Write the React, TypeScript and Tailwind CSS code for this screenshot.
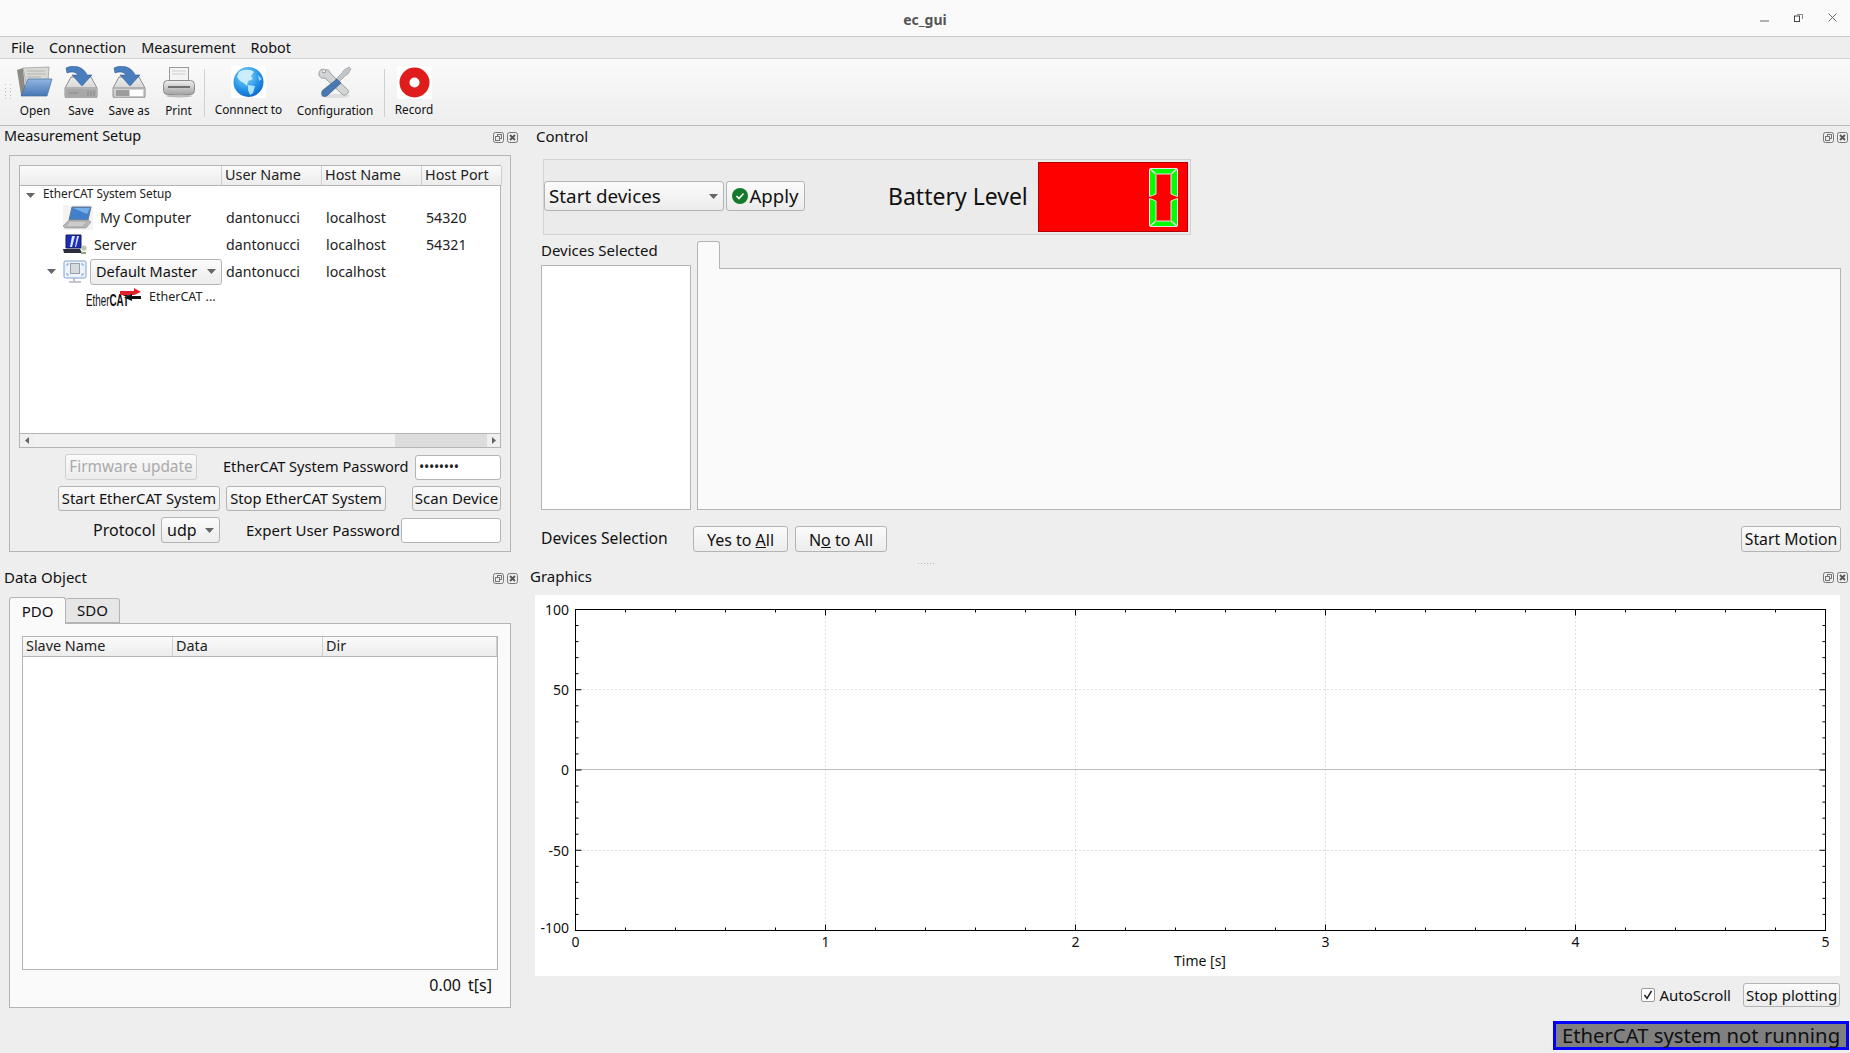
import type { ReactNode } from 'react'

const btn = 'flex items-center justify-center rounded-[3px] border border-[#b4b4b4] bg-gradient-to-b from-[#fbfbfb] to-[#ececec] text-[15px] text-[#111]'
const headCell = 'flex items-center border-r border-[#d0d0d0] bg-gradient-to-b from-[#fbfbfb] to-[#ececec] pl-[3px] text-[14.4px] leading-none text-[#222]'

function Tri({ className = '' }: { className?: string }) {
  return (
    <svg width="9" height="5" viewBox="0 0 9 5" className={className}>
      <path d="M0 0H9L4.5 5Z" fill="#666" />
    </svg>
  )
}

function DockIcons() {
  return (
    <div className="flex gap-[3px]">
      <svg width="11" height="11" viewBox="0 0 11 11" fill="none" stroke="#777">
        <rect x="0.5" y="0.5" width="10" height="10" rx="2" />
        <rect x="4.5" y="2.5" width="4" height="4" />
        <rect x="2.5" y="4.5" width="4" height="4" fill="#eee" />
      </svg>
      <svg width="11" height="11" viewBox="0 0 11 11" fill="none" stroke="#777">
        <rect x="0.5" y="0.5" width="10" height="10" rx="2" />
        <path d="M3 3L8 8M8 3L3 8" stroke="#555" strokeWidth="1.8" />
      </svg>
    </div>
  )
}

function DockTitle({ title, pad, size = 'text-[15px]' }: { title: string; pad: string; size?: string }) {
  return (
    <div className={`flex h-[22px] items-center justify-between pr-[2px] text-[#111] ${size} ${pad}`}>
      <span className="-mt-[2px]">{title}</span>
      <DockIcons />
    </div>
  )
}

function OpenIcon() {
  return (
    <svg width="36" height="32" viewBox="0 0 36 32">
      <defs>
        <linearGradient id="openBlue" x1="0" y1="0" x2="0" y2="1">
          <stop offset="0" stopColor="#93b6e2" />
          <stop offset="1" stopColor="#4676b6" />
        </linearGradient>
      </defs>
      <path d="M0 4L6 2L9 30L4 29Z" fill="#8b8b85" />
      <path d="M6 2L32 1L31 15L9 17Z" fill="#d9d9d6" stroke="#999" strokeWidth="0.7" />
      <path d="M10 5H28M10 8H29M10 11H24" stroke="#b4b4b0" />
      <path d="M4 30L11 13H35L30 30Z" fill="url(#openBlue)" stroke="#46719f" strokeWidth="0.7" />
    </svg>
  )
}

function DriveIcon({ saveAs }: { saveAs?: boolean }) {
  const id = saveAs ? 'driveA' : 'driveB'
  return (
    <svg width="34" height="32" viewBox="0 0 34 32">
      <defs>
        <linearGradient id={id} x1="0" y1="0" x2="0" y2="1">
          <stop offset="0" stopColor="#ececec" />
          <stop offset="1" stopColor="#c4c4c4" />
        </linearGradient>
      </defs>
      <path d="M7 11H27L33 22V30Q33 32 31 32H3Q1 32 1 30V22Z" fill={`url(#${id})`} stroke="#8e8e8e" />
      <path d="M2 22H32" stroke="#8e8e8e" />
      {saveAs ? (
        <>
          <rect x="4" y="24" width="13" height="6" fill="#9c9c9c" />
          <rect x="18" y="24" width="13" height="6" fill="#fff" />
        </>
      ) : (
        <>
          <rect x="2" y="23" width="30" height="8" fill="#a8a8a8" />
          <path d="M5 27H14M24 25V30M27 25V30M30 25V30" stroke="#878787" />
        </>
      )}
      <path d="M2 2C10 -2 20 1 23 9H28L18 20L8 9H14C12 6 8 5 3 7Z" fill="#4a7dbb" stroke="#2f5f9b" strokeWidth="0.6" />
    </svg>
  )
}

function PrintIcon() {
  return (
    <svg width="32" height="32" viewBox="0 0 32 32">
      <defs>
        <linearGradient id="printBody" x1="0" y1="0" x2="0" y2="1">
          <stop offset="0" stopColor="#f0f0f0" />
          <stop offset="1" stopColor="#a4a4a4" />
        </linearGradient>
      </defs>
      <rect x="6.5" y="1.5" width="19" height="13" fill="#f4f4f4" stroke="#9a9a9a" />
      <path d="M9 5H23M9 8H23" stroke="#cfcfcf" />
      <rect x="0.5" y="14.5" width="31" height="14" rx="4" fill="url(#printBody)" stroke="#8c8c8c" />
      <rect x="5" y="20" width="22" height="2" fill="#6f6f6f" />
      <ellipse cx="16" cy="30" rx="13" ry="1.5" fill="#bcbcbc" />
    </svg>
  )
}

function GlobeIcon() {
  return (
    <svg width="35" height="32" viewBox="0 0 35 32" className="bg-white">
      <defs>
        <radialGradient id="globeBlue" cx="0.4" cy="0.3" r="0.8">
          <stop offset="0" stopColor="#8fdcfb" />
          <stop offset="0.6" stopColor="#2190e6" />
          <stop offset="1" stopColor="#0b5fc2" />
        </radialGradient>
      </defs>
      <circle cx="17.5" cy="16" r="15" fill="url(#globeBlue)" />
      <path d="M8 6C12 3 20 3 23 6L20 10L22 13L17 15L16 20L13 17L9 15L6 11Z" fill="#d9f4fc" opacity="0.85" />
      <path d="M17 19L24 20L22 27L19 29L17 24Z" fill="#c8eefb" opacity="0.85" />
      <path d="M27 9L31 13L28 15Z" fill="#c8eefb" opacity="0.7" />
    </svg>
  )
}

function ConfigIcon() {
  return (
    <svg width="34" height="32" viewBox="0 0 34 32">
      <ellipse cx="17" cy="30" rx="15" ry="2" fill="#dedede" />
      <path d="M8 4C4 2 1 4 1 8C1 11 4 13 7 12L24 28C26 30 29 29 30 27C31 25 30 24 29 23L12 7C12 5 10 3 8 4L7 7L4 6" fill="#d2d4d6" stroke="#9a9c9e" />
      <path d="M31 1L33 3L30 8L27 10L20 17L17 14L24 7L26 4Z" fill="#c2c6ca" stroke="#8e9296" strokeWidth="0.6" />
      <path d="M19 13L23 17L10 29C8 31 5 31 4 29C3 27 4 25 5 24Z" fill="#4a79b0" stroke="#2b5585" strokeWidth="0.6" />
    </svg>
  )
}

function RecordIcon() {
  return (
    <svg width="35" height="33" viewBox="0 0 35 33" className="bg-white">
      <circle cx="17.5" cy="16.5" r="15" fill="#e01d1d" />
      <circle cx="17.5" cy="16.5" r="5" fill="#fff" />
    </svg>
  )
}

function LaptopIcon() {
  return (
    <svg width="30" height="25" viewBox="0 0 30 25" className="bg-[#f3f3f3]">
      <path d="M9 2H28L25 15H6Z" fill="#3f7fcc" stroke="#6a7a8c" />
      <path d="M10 3H27L24 9Z" fill="#77aee6" />
      <path d="M6 15H25L28 17L23 23H2L0 21Z" fill="#b5b5b5" stroke="#8c8c8c" strokeWidth="0.6" />
      <path d="M6 18H22M5 20H20" stroke="#e2e2e2" />
    </svg>
  )
}

function ServerIcon() {
  return (
    <svg width="24" height="21" viewBox="0 0 24 21">
      <path d="M3 1H18V14H3Z" fill="#1a2fb8" stroke="#151a5a" />
      <path d="M9 2L7 13H9L12 2ZM14 2L12 13H13L16 2Z" fill="#dfe6ff" />
      <path d="M0 15H17L19 19H1Z" fill="#2c2c3a" />
      <circle cx="21" cy="14" r="2.6" fill="#b8c8b0" />
      <path d="M18 19H23" stroke="#8ea885" strokeWidth="2" />
    </svg>
  )
}

function MasterIcon() {
  return (
    <svg width="24" height="24" viewBox="0 0 24 24" fill="none">
      <rect x="1" y="1" width="22" height="17" rx="1.5" fill="#eef3fb" stroke="#7e9fd0" />
      <rect x="7.5" y="3.5" width="9" height="10" fill="#d5d9e0" stroke="#9aa0aa" />
      <path d="M4 6V4H6M18 4H20V6M4 13V15H6M18 15H20V13" stroke="#7ea6dc" />
      <path d="M11 18V21M6 22H18" stroke="#aeb4bc" strokeWidth="1.6" />
    </svg>
  )
}

function EthercatLogo() {
  return (
    <svg width="55" height="19" viewBox="0 0 55 19" className="overflow-visible">
      <text x="0" y="18" fontSize="17" fill="#111" textLength="43" lengthAdjust="spacingAndGlyphs" fontFamily="'Liberation Sans', sans-serif">
        Ether<tspan fontWeight="700">CAT</tspan>
      </text>
      <path d="M34 3H48V0L55 4L48 7H34Z" fill="#e3202a" />
      <path d="M55 8H46V6L38 9.5L46 13V11H55Z" fill="#111" />
    </svg>
  )
}

function ToolButton({ label, width, icon, up }: { label: string; width: string; icon: ReactNode; up?: boolean }) {
  return (
    <div className={`flex flex-col items-center pt-[7px] ${width}`}>
      <div className="flex h-[32px] items-center justify-center">{icon}</div>
      <span className={`flex h-[18px] items-center text-[11.8px] whitespace-nowrap text-[#111] ${up ? 'mt-[3px]' : 'mt-[4px]'}`}>{label}</span>
    </div>
  )
}

function ToolSep() {
  return <div className="mt-[10px] h-[48px] w-px bg-[#d0d0d0]" />
}

function TreeRow({ h, first, user, host, port }: { h: string; first: ReactNode; user?: string; host?: string; port?: string }) {
  return (
    <div className={`grid grid-cols-[202px_100px_100px_80px] items-center text-[14.2px] text-[#222] ${h}`}>
      <div className="flex h-full items-center">{first}</div>
      <div className="pl-[4px]">{user}</div>
      <div className="pl-[4px]">{host}</div>
      <div className="pl-[4px]">{port}</div>
    </div>
  )
}

function PlotChart() {
  const xs = [0, 1, 2, 3, 4, 5]
  const ys = [
    { v: '100', y: 14.5 },
    { v: '50', y: 94.5 },
    { v: '0', y: 174.5 },
    { v: '-50', y: 255.5 },
    { v: '-100', y: 335.5 },
  ]
  const minorX = Array.from({ length: 26 }, (_, i) => 40.5 + i * 50)
  const minorY = Array.from({ length: 21 }, (_, i) => 14.5 + i * 16.05)
  return (
    <svg width="1305" height="381" viewBox="0 0 1305 381" className="bg-white">
      {xs.slice(1, 5).map((x) => (
        <line key={x} x1={40.5 + x * 250} x2={40.5 + x * 250} y1="14.5" y2="335.5" stroke="#bdbdbd" strokeDasharray="1 3" />
      ))}
      {ys.slice(1, 4).map((t) => (
        <line key={t.v} x1="40.5" x2="1290.5" y1={t.y} y2={t.y} stroke="#bdbdbd" strokeDasharray={t.v === '0' ? undefined : '1 3'} />
      ))}
      <rect x="40.5" y="14.5" width="1250" height="321" fill="none" stroke="#000" />
      {minorX.map((x, i) => {
        const len = i % 5 === 0 ? 6 : 3
        return (
          <g key={x} stroke="#000">
            <line x1={x} x2={x} y1="14.5" y2={14.5 + len} />
            <line x1={x} x2={x} y1="335.5" y2={335.5 - len} />
          </g>
        )
      })}
      {minorY.map((y, i) => {
        const len = i % 5 === 0 ? 6 : 3
        return (
          <g key={y} stroke="#000">
            <line x1="40.5" x2={40.5 + len} y1={y} y2={y} />
            <line x1="1290.5" x2={1290.5 - len} y1={y} y2={y} />
          </g>
        )
      })}
      <g fontSize="14" fill="#111" fontFamily="'Noto Sans', sans-serif">
        {ys.map((t) => (
          <text key={t.v} x="34" y={t.v === '-100' ? t.y + 2 : t.y + 5} textAnchor="end">{t.v}</text>
        ))}
        {xs.map((x) => (
          <text key={x} x={40.5 + x * 250} y="352" textAnchor="middle">{x}</text>
        ))}
        <text x="665" y="371" textAnchor="middle">Time [s]</text>
      </g>
    </svg>
  )
}

function LcdZero() {
  return (
    <svg width="29" height="59" viewBox="0 0 29 59">
      <g fill="#00ff00" stroke="#e4e4e4" strokeWidth="1">
        <path d="M1 0.5H28L21.5 6H7.5Z" />
        <path d="M7.5 53H21.5L28 58.5H1Z" />
        <path d="M0.5 1L7 6.5V26L3.5 27.5L0.5 28.5Z" />
        <path d="M28.5 1L22 6.5V26L25.5 27.5L28.5 28.5Z" />
        <path d="M0.5 30.5L3.5 31.5L7 33V52.5L0.5 58Z" />
        <path d="M28.5 30.5L25.5 31.5L22 33V52.5L28.5 58Z" />
      </g>
    </svg>
  )
}

export default function App() {
  return (
    <div className="flex h-[1053px] w-[1850px] flex-col overflow-hidden bg-[#eeeeee] font-['Noto_Sans',sans-serif]">
      {/* Window title bar */}
      <div className="relative flex h-[37px] items-center justify-center border-b border-[#c8c8c8] bg-[#fafafa] pt-[3px]">
        <span className="text-[14px] font-bold text-[#555]">ec_gui</span>
        <div className="absolute top-[12px] right-[13px] flex items-center gap-[25px]">
          <svg width="9" height="11" viewBox="0 0 9 11"><path d="M0 9H9" stroke="#666" /></svg>
          <svg width="9" height="9" viewBox="0 0 9 9" fill="none"><path d="M3 1.5H8.5V6" stroke="#888" /><rect x="0.5" y="3" width="5" height="5.5" stroke="#444" /></svg>
          <svg width="9" height="9" viewBox="0 0 9 9"><path d="M0.5 0.5L8.5 8.5M8.5 0.5L0.5 8.5" stroke="#666" /></svg>
        </div>
      </div>

      {/* Menu bar */}
      <div className="flex h-[22px] items-center gap-[15px] border-b border-[#d4d4d4] pl-[11px] text-[14.4px] text-[#111]">
        <span>File</span>
        <span>Connection</span>
        <span>Measurement</span>
        <span>Robot</span>
      </div>

      {/* Toolbar */}
      <div className="flex h-[67px] border-b border-[#bdbdbd] bg-gradient-to-b from-[#fafafa] to-[#eeeeee]">
        <div className="mt-[25px] ml-[5px] grid h-[16px] w-[8px] grid-cols-2 gap-[2px]">
          {Array.from({ length: 10 }, (_, i) => (
            <div key={i} className="h-px w-px bg-[#bbb]" />
          ))}
        </div>
        <ToolButton label="Open" width="w-[44px]" icon={<OpenIcon />} />
        <ToolButton label="Save" width="w-[48px]" icon={<DriveIcon />} />
        <ToolButton label="Save as" width="w-[48px]" icon={<DriveIcon saveAs />} />
        <ToolButton label="Print" width="w-[51px]" icon={<PrintIcon />} />
        <ToolSep />
        <ToolButton label="Connnect to" width="w-[87px]" icon={<GlobeIcon />} up />
        <ToolButton label="Configuration" width="w-[86px]" icon={<ConfigIcon />} />
        <div className="w-[6px]" />
        <ToolSep />
        <ToolButton label="Record" width="w-[58px]" icon={<RecordIcon />} up />
      </div>

      <div className="flex flex-1">
        {/* Left column */}
        <div className="flex w-[527px] flex-col">
          <DockTitle title="Measurement Setup" pad="pl-[4px] pr-[9px]" size="text-[14.4px]" />

          <div className="mt-[7px] ml-[9px] flex h-[397px] w-[502px] flex-col border border-[#b4b4b4] px-[9px] pt-[9px]">
            {/* Tree */}
            <div className="flex h-[283px] w-[482px] flex-col border border-[#b4b4b4] bg-white">
              <div className="grid h-[20px] grid-cols-[202px_100px_100px_80px] border-b border-[#b4b4b4]">
                <div className={headCell} />
                <div className={headCell}>User Name</div>
                <div className={headCell}>Host Name</div>
                <div className={headCell}>Host Port</div>
              </div>
              <div className="flex-1">
                <TreeRow h="h-[18px]" first={<><Tri className="ml-[6px]" /><span className="ml-[8px] -mt-[2px] text-[11.8px]">EtherCAT System Setup</span></>} />
                <TreeRow h="h-[27px]" first={<><div className="ml-[43px]"><LaptopIcon /></div><span className="ml-[7px]">My Computer</span></>} user="dantonucci" host="localhost" port="54320" />
                <TreeRow h="h-[27px]" first={<><div className="ml-[43px]"><ServerIcon /></div><span className="ml-[7px]">Server</span></>} user="dantonucci" host="localhost" port="54321" />
                <TreeRow
                  h="h-[27px]"
                  first={
                    <>
                      <Tri className="ml-[27px]" />
                      <div className="ml-[7px]"><MasterIcon /></div>
                      <div className={`ml-[3px] h-[26px] w-[132px] !justify-between pr-[4px] pl-[5px] !text-[14.5px] ${btn}`}>
                        <span className="whitespace-nowrap">Default Master</span>
                        <Tri className="mr-[1px]" />
                      </div>
                    </>
                  }
                  user="dantonucci"
                  host="localhost"
                />
                <TreeRow h="h-[24px]" first={<><div className="ml-[66px]"><EthercatLogo /></div><span className="ml-[8px] text-[12.5px] whitespace-nowrap">EtherCAT ...</span></>} />
              </div>
              {/* Horizontal scrollbar */}
              <div className="flex h-[14px] items-center border-t border-[#b4b4b4] bg-[#efefef]">
                <div className="flex w-[14px] justify-center">
                  <svg width="4" height="7" viewBox="0 0 4 7"><path d="M4 0V7L0 3.5Z" fill="#666" /></svg>
                </div>
                <div className="h-full w-[361px] bg-[#f1f1f1]" />
                <div className="h-full w-[92px] bg-[#dcdcdc]" />
                <div className="flex flex-1 justify-center">
                  <svg width="4" height="7" viewBox="0 0 4 7"><path d="M0 0V7L4 3.5Z" fill="#666" /></svg>
                </div>
              </div>
            </div>

            {/* Controls */}
            <div className="mt-[6px] flex h-[26px] items-center text-[14.6px] text-[#111]">
              <div className={`ml-[46px] h-[26px] w-[132px] border-[#cfcfcf] !text-[15.4px] !text-[#aaa] ${btn}`}>Firmware update</div>
              <span className="ml-[26px] w-[192px] whitespace-nowrap">EtherCAT System Password</span>
              <div className="flex h-[25px] w-[86px] items-center rounded-[3px] border border-[#b4b4b4] bg-white pl-[3px] text-[14px] leading-none tracking-[-0.3px] text-[#222]">••••••••</div>
            </div>
            <div className="mt-[6px] flex h-[25px] items-center">
              <div className={`ml-[39px] h-[25px] w-[162px] !text-[14.8px] ${btn}`}>Start EtherCAT System</div>
              <div className={`ml-[6px] h-[25px] w-[160px] !text-[14.7px] ${btn}`}>Stop EtherCAT System</div>
              <div className={`ml-[26px] h-[25px] w-[89px] ${btn}`}>Scan Device</div>
            </div>
            <div className="mt-[6px] flex h-[26px] items-center text-[15px] text-[#111]">
              <span className="ml-[74px] w-[68px] text-[16px]">Protocol</span>
              <div className={`h-[26px] w-[59px] !justify-between px-[5px] !text-[16px] ${btn}`}>
                <span>udp</span>
                <Tri />
              </div>
              <span className="ml-[26px] w-[155px] whitespace-nowrap">Expert User Password</span>
              <div className="h-[25px] w-[100px] rounded-[3px] border border-[#b4b4b4] bg-white" />
            </div>
          </div>

          <div className="mt-[15px]">
            <DockTitle title="Data Object" pad="pl-[4px] pr-[9px]" />
          </div>

          {/* Tabs */}
          <div className="mt-[8px] ml-[9px] flex h-[26px] items-end text-[15px] text-[#111]">
            <div className="z-10 -mb-px flex h-[27px] w-[57px] items-center justify-center rounded-t-[3px] border border-b-0 border-[#b4b4b4] bg-[#fafafa]">PDO</div>
            <div className="flex h-[25px] w-[54px] items-center justify-center rounded-t-[3px] border border-l-0 border-[#b4b4b4] bg-[#e6e6e6]">SDO</div>
          </div>
          <div className="ml-[9px] flex h-[385px] w-[502px] flex-col border border-[#b4b4b4] bg-[#fafafa] px-[12px] pt-[12px]">
            <div className="flex h-[334px] w-[476px] flex-col border border-[#b4b4b4] bg-white">
              <div className="grid h-[20px] grid-cols-[150px_150px_1fr] border-b border-[#b4b4b4]">
                <div className={headCell}>Slave Name</div>
                <div className={headCell}>Data</div>
                <div className={headCell}>Dir</div>
              </div>
            </div>
            <div className="mt-[3px] flex justify-end gap-[7px] pr-[6px] text-[16px] text-[#111]">
              <span>0.00</span>
              <span>t[s]</span>
            </div>
          </div>
        </div>

        {/* Right column */}
        <div className="flex flex-1 flex-col">
          <DockTitle title="Control" pad="pl-[9px]" />

          {/* Control box */}
          <div className="mt-[11px] ml-[16px] flex h-[76px] w-[648px] items-center border border-[#d2d2d2] bg-[#ebebeb] pb-[2px] text-[#111]">
            <div className={`h-[30px] w-[180px] !justify-between px-[4px] !text-[18.8px] ${btn}`}>
              <span>Start devices</span>
              <Tri className="mr-[1px]" />
            </div>
            <div className={`ml-[2px] h-[30px] w-[79px] gap-[1px] !text-[18.6px] ${btn}`}>
              <svg width="16" height="16" viewBox="0 0 16 16">
                <circle cx="8" cy="8" r="8" fill="#157a2c" />
                <path d="M4.5 8L7 10.5L11.5 5.5" fill="none" stroke="#fff" strokeWidth="1.6" />
              </svg>
              <span>Apply</span>
            </div>
            <span className="ml-[83px] w-[150px] text-[23px] whitespace-nowrap">Battery Level</span>
            <div className="-mb-[2px] flex h-[70px] w-[150px] items-center justify-end border border-[#b00000] bg-[#ff0000] pr-[9px]">
              <LcdZero />
            </div>
          </div>

          <div className="mt-[6px] flex h-[269px]">
            <div className="ml-[14px] flex w-[150px] flex-col">
              <span className="-mt-[6px] flex h-[30px] items-center text-[15px] text-[#111]">Devices Selected</span>
              <div className="flex-1 border border-[#b4b4b4] bg-white" />
            </div>
            <div className="ml-[6px] flex w-[1144px] flex-col">
              <div className="z-10 -mb-px h-[28px] w-[23px] rounded-t-[3px] border border-b-0 border-[#b4b4b4] bg-[#fafafa]" />
              <div className="flex-1 border border-[#b4b4b4] bg-[#fafafa]" />
            </div>
          </div>

          <div className="mt-[16px] flex h-[26px] items-center text-[#111]">
            <span className="ml-[14px] w-[152px] text-[15.7px]">Devices Selection</span>
            <div className={`h-[26px] w-[95px] pt-px !text-[16px] ${btn}`}>Yes to&nbsp;<span className="underline">A</span>ll</div>
            <div className={`ml-[7px] h-[26px] w-[92px] pt-px !text-[16px] ${btn}`}>N<span className="underline">o</span>&nbsp;to All</div>
            <div className={`ml-auto mr-[9px] h-[26px] w-[100px] pt-px !text-[15.8px] ${btn}`}>Start Motion</div>
          </div>

          <div className="mt-[11px] ml-[391px] flex h-px w-[16px] justify-between">
            {Array.from({ length: 6 }, (_, i) => (
              <div key={i} className="h-px w-px bg-[#b8b8b8]" />
            ))}
          </div>

          <div className="mt-[2px]">
            <DockTitle title="Graphics" pad="pl-[3px]" />
          </div>

          {/* Plot */}
          <div className="mt-[7px] ml-[8px] h-[381px] w-[1305px]">
            <PlotChart />
          </div>

          <div className="mt-[7px] flex h-[24px] items-center justify-end pr-[10px] text-[15px] text-[#111]">
            <div className="flex h-[14px] w-[14px] items-center justify-center rounded-[2px] border border-[#999] bg-white">
              <svg width="10" height="10" viewBox="0 0 10 10"><path d="M1.5 5L4 8.5L8.5 1" fill="none" stroke="#222" strokeWidth="1.5" /></svg>
            </div>
            <span className="ml-[5px]">AutoScroll</span>
            <div className={`ml-[12px] h-[24px] w-[97px] ${btn}`}>Stop plotting</div>
          </div>

          <div className="mt-[14px] flex justify-end pr-px">
            <div className="flex h-[29px] w-[296px] items-center justify-center border-[3px] border-[#0000ff] bg-[#808080] text-[20.3px] whitespace-nowrap text-[#111]">
              EtherCAT system not running
            </div>
          </div>
        </div>
      </div>
    </div>
  )
}
